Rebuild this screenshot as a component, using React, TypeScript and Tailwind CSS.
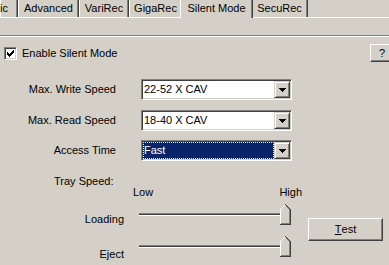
const sunken =
  'border border-t-[#808080] border-l-[#808080] border-b-white border-r-white shadow-[inset_1px_1px_#404040,inset_-1px_-1px_#d4d0c8]'
const raised =
  'border border-t-white border-l-white border-b-[#404040] border-r-[#404040] shadow-[inset_-1px_-1px_#808080]'

function Tab({ label, width, selected, className = '' }: { label: string; width: string; selected?: boolean; className?: string }) {
  if (selected) {
    return (
      <div className={`relative z-10 -mx-[2px] flex h-[18px] shrink-0 items-center justify-center self-start border-l border-l-white border-r border-r-[#404040] bg-[#d4d0c8] pb-[2px] shadow-[inset_-1px_0_#808080] ${width}`}>
        {label}
      </div>
    )
  }
  return (
    <div className={`flex h-[17px] shrink-0 items-center justify-center border-l border-l-white border-r border-r-[#404040] shadow-[inset_-1px_0_#808080] ${width} ${className}`}>
      {label}
    </div>
  )
}

function Checkbox() {
  const px = [
    [6, 0], [5, 1], [6, 1], [0, 2], [4, 2], [5, 2], [6, 2],
    [0, 3], [1, 3], [3, 3], [4, 3], [5, 3], [0, 4], [1, 4], [2, 4], [3, 4], [4, 4],
    [1, 5], [2, 5], [3, 5], [2, 6],
  ]
  return (
    <div className={`flex h-[13px] w-[13px] shrink-0 items-center justify-center bg-white ${sunken}`}>
      <svg width="7" height="7" viewBox="0 0 7 7" shapeRendering="crispEdges">
        {px.map(([x, y]) => (
          <rect key={`${x}-${y}`} x={x} y={y} width="1" height="1" fill="#000" />
        ))}
      </svg>
    </div>
  )
}

function ComboArrow() {
  return (
    <div className="flex h-full w-[16px] shrink-0 items-center justify-center border border-t-[#d4d0c8] border-l-[#d4d0c8] border-b-[#404040] border-r-[#404040] bg-[#d4d0c8] shadow-[inset_1px_1px_#fff,inset_-1px_-1px_#808080]">
      <svg width="7" height="4" viewBox="0 0 7 4" shapeRendering="crispEdges">
        <rect x="0" y="0" width="7" height="1" fill="#000" />
        <rect x="1" y="1" width="5" height="1" fill="#000" />
        <rect x="2" y="2" width="3" height="1" fill="#000" />
        <rect x="3" y="3" width="1" height="1" fill="#000" />
      </svg>
    </div>
  )
}

function ComboRow({ label, value, focused, className = '' }: { label: string; value: string; focused?: boolean; className?: string }) {
  return (
    <div className={`flex h-[21px] items-center ${className}`}>
      <div className="w-[116px] text-right">{label}</div>
      <div className={`ml-[25px] flex h-[21px] w-[151px] bg-white ${sunken} p-px`}>
        {focused ? (
          <div className="flex flex-1 items-center border border-dotted border-[#f4eeb0] bg-[#0a246a] text-white">{value}</div>
        ) : (
          <div className="flex flex-1 items-center pl-px">{value}</div>
        )}
        <ComboArrow />
      </div>
    </div>
  )
}

function Thumb() {
  return (
    <svg className="absolute right-0 top-0" width="11" height="21" viewBox="0 0 11 21" shapeRendering="crispEdges">
      <polygon points="0,5 5,0 10,5 10,20 0,20" fill="#d4d0c8" />
      <polyline points="0.5,20 0.5,5.5 5.5,0.5" fill="none" stroke="#fff" strokeWidth="1" />
      <polyline points="5.5,0.5 10.5,5.5 10.5,20.5 0,20.5" fill="none" stroke="#404040" strokeWidth="1" />
      <polyline points="5.5,1.8 9.5,5.8 9.5,19.5 1,19.5" fill="none" stroke="#808080" strokeWidth="1" />
    </svg>
  )
}

function SliderRow({ label, labelOffset, className = '' }: { label: string; labelOffset: string; className?: string }) {
  return (
    <div className={`flex ${className}`}>
      <div className={`w-[124px] text-right ${labelOffset}`}>{label}</div>
      <div className="relative ml-[15px] h-[21px] w-[152px]">
        <div className="mt-[9px] h-[3px] border-t border-t-[#808080] border-b border-b-white bg-[#404040]" />
        <Thumb />
      </div>
    </div>
  )
}

export default function App() {
  return (
    <div className="h-[265px] w-[389px] overflow-hidden bg-[#d4d0c8] font-['Liberation_Sans',Arial,sans-serif] text-[11px] leading-[13px] text-black">
      <div className="flex h-[18px] border-b border-b-white">
        <Tab label="ic" width="w-[18px]" className="!justify-end pr-[9px]" />
        <Tab label="Advanced" width="w-[61px]" />
        <Tab label="VariRec" width="w-[50px]" />
        <Tab label="GigaRec" width="w-[53px]" />
        <Tab label="Silent Mode" width="w-[73px]" selected />
        <Tab label="SecuRec" width="w-[57px]" />
      </div>

      <div className="mt-[17px] h-[2px] border-t border-t-[#808080] border-b border-b-white" />

      <div className="mt-[7px] flex h-[18px] items-center">
        <div className="ml-[4px]">
          <Checkbox />
        </div>
        <span className="ml-[5px]">Enable Silent Mode</span>
        <button className={`-mr-[5px] ml-auto flex h-[18px] w-[24px] shrink-0 items-center justify-center bg-[#d4d0c8] ${raised}`}>?</button>
      </div>

      <ComboRow label="Max. Write Speed" value="22-52 X CAV" className="mt-[17px]" />
      <ComboRow label="Max. Read Speed" value="18-40 X CAV" className="mt-[10px]" />
      <ComboRow label="Access Time" value="Fast" focused className="mt-[9px]" />

      <div className="mt-[14px] pl-[54px]">Tray Speed:</div>
      <div className="-mt-[2px] ml-[133px] flex w-[169px] justify-between">
        <span>Low</span>
        <span>High</span>
      </div>

      <div className="mt-[5px] flex">
        <div className="flex flex-col">
          <SliderRow label="Loading" labelOffset="mt-[9px]" />
          <SliderRow label="Eject" labelOffset="mt-[12px]" className="mt-[10px]" />
        </div>
        <button className={`ml-[17px] mt-[14px] flex h-[23px] w-[75px] items-center justify-center bg-[#d4d0c8] ${raised}`}>
          <span className="underline underline-offset-1">T</span>est
        </button>
      </div>
    </div>
  )
}
